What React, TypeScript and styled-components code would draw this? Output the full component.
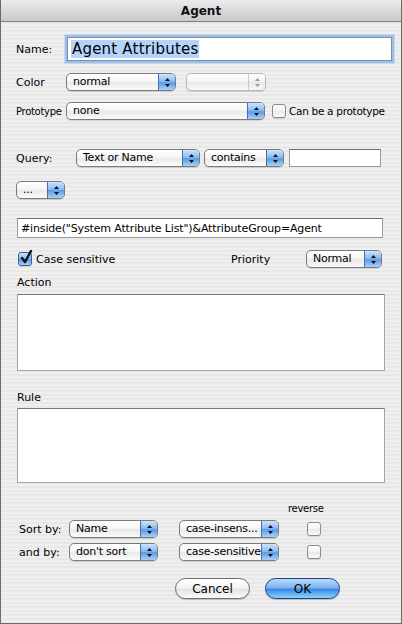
import * as React from 'react'
import styled, { createGlobalStyle, css } from 'styled-components'

const GlobalStyle = createGlobalStyle`
  html, body {
    margin: 0;
    padding: 0;
    background: #fff;
  }
  body {
    font-family: "DejaVu Sans", "Liberation Sans", sans-serif;
    color: #000;
  }
`

const Window = styled.div`
  width: 402px;
  height: 624px;
  box-sizing: border-box;
  border: 1px solid #6a6a6a;
  border-top: none;
  display: flex;
  flex-direction: column;
  background: repeating-linear-gradient(#efefef 0 2px, #e8e8e8 2px 4px);
  font-size: 11px;
`

const TitleBar = styled.div`
  height: 22px;
  box-sizing: border-box;
  border-bottom: 1px solid #7d7d7d;
  background: linear-gradient(#ececec, #d6d6d6 60%, #cbcbcb);
  display: flex;
  align-items: center;
  justify-content: center;
  font-size: 12px;
  font-weight: bold;
  color: #111;
  border-radius: 5px 5px 0 0;
`

const Body = styled.div`
  display: flex;
  flex-direction: column;
  padding-left: 15px;
`

const Row = styled.div<{ $top: number; $h?: number; $left?: number }>`
  display: flex;
  align-items: center;
  margin-top: ${(p) => p.$top}px;
  height: ${(p) => p.$h ?? 18}px;
  padding-left: ${(p) => p.$left ?? 0}px;
`

const Label = styled.span<{ $w?: number; $size?: number; $tight?: boolean }>`
  flex: none;
  width: ${(p) => (p.$w ? `${p.$w}px` : 'auto')};
  white-space: nowrap;
  font-size: ${(p) => p.$size ?? 11}px;
  letter-spacing: ${(p) => (p.$tight ? '-0.3px' : '0')};
`

const Gap = styled.span<{ $w: number }>`
  flex: none;
  width: ${(p) => p.$w}px;
`

const Field = styled.div<{ $w: number; $h: number; $focus?: boolean }>`
  flex: none;
  box-sizing: border-box;
  width: ${(p) => p.$w}px;
  height: ${(p) => p.$h}px;
  background: #fff;
  border: 1px solid #9a9a9a;
  border-top-color: #6f6f6f;
  display: flex;
  align-items: center;
  padding-left: 3px;
  font-size: 11px;
  letter-spacing: -0.15px;
  white-space: nowrap;
  ${(p) =>
    p.$focus &&
    css`
      border-color: #7c8fa8;
      box-shadow: 0 0 0 2px #9cc0ea, 0 0 0 3px #c3d9f2;
    `}
`

const Selected = styled.span`
  background: #b6d4fb;
  font-size: 15px;
  padding: 0 1px;
  line-height: 18px;
  letter-spacing: 0.2px;
`

const TextArea = styled.div<{ $h: number }>`
  box-sizing: border-box;
  width: 368px;
  height: ${(p) => p.$h}px;
  background: #fff;
  border: 1px solid #a4a4a4;
  border-top-color: #777;
  margin-left: 1px;
`

const PopBox = styled.div<{ $w: number; $disabled?: boolean }>`
  flex: none;
  box-sizing: border-box;
  width: ${(p) => p.$w}px;
  height: 18px;
  border: 1px solid ${(p) => (p.$disabled ? '#b8b8b8' : '#7b7b7b')};
  border-radius: 5px;
  display: flex;
  overflow: hidden;
  background: linear-gradient(#ffffff, #f6f6f6 45%, #e9e9e9 55%, #fbfbfb);
  box-shadow: 0 1px 0 rgba(0, 0, 0, 0.12);
`

const PopText = styled.span`
  flex: 1;
  padding-left: 6px;
  font-size: 11px;
  letter-spacing: -0.25px;
  line-height: 16px;
  white-space: nowrap;
  overflow: hidden;
`

const PopArrows = styled.span<{ $disabled?: boolean }>`
  flex: none;
  width: 16px;
  border-left: 1px solid ${(p) => (p.$disabled ? '#c9c9c9' : '#4a6fa6')};
  display: flex;
  align-items: center;
  justify-content: center;
  background: ${(p) =>
    p.$disabled
      ? 'linear-gradient(#fdfdfd, #f1f1f1 50%, #e7e7e7 50%, #f7f7f7)'
      : 'linear-gradient(#cfe4fb, #89bcf1 45%, #5a9be8 55%, #a8d2f8)'};
`

const PopUp = ({ w, text, disabled }: { w: number; text?: string; disabled?: boolean }) => (
  <PopBox $w={w} $disabled={disabled}>
    <PopText>{text}</PopText>
    <PopArrows $disabled={disabled}>
      <svg width="7" height="11" viewBox="0 0 7 11">
        <path d="M3.5 1 L6 4 L1 4 Z M3.5 10 L6 7 L1 7 Z" fill={disabled ? '#9a9a9a' : '#101010'} />
      </svg>
    </PopArrows>
  </PopBox>
)

const CheckBox = styled.span<{ $checked?: boolean }>`
  flex: none;
  position: relative;
  box-sizing: border-box;
  width: 14px;
  height: 14px;
  border: 1px solid ${(p) => (p.$checked ? '#3d5f94' : '#8a8a8a')};
  border-radius: 3px;
  background: ${(p) =>
    p.$checked
      ? 'linear-gradient(#cfe4fb, #89bcf1 45%, #5a9be8 55%, #a8d2f8)'
      : 'linear-gradient(#ffffff, #f3f3f3 50%, #e8e8e8 50%, #fafafa)'};
  box-shadow: 0 1px 0 rgba(0, 0, 0, 0.1);
`

const CheckMark = styled.svg`
  position: absolute;
  left: 1px;
  top: -4px;
`

const Check = ({ checked }: { checked?: boolean }) => (
  <CheckBox $checked={checked}>
    {checked && (
      <CheckMark width="13" height="16" viewBox="0 0 13 16">
        <path d="M2 9 L5 13 L11 2" stroke="#111" strokeWidth="2.4" fill="none" strokeLinecap="round" strokeLinejoin="round" />
      </CheckMark>
    )}
  </CheckBox>
)

const Button = styled.div<{ $default?: boolean }>`
  flex: none;
  box-sizing: border-box;
  width: 75px;
  height: 21px;
  border-radius: 11px;
  display: flex;
  align-items: center;
  justify-content: center;
  font-size: 12px;
  border: 1px solid ${(p) => (p.$default ? '#1f3f86' : '#6e6e6e')};
  background: ${(p) =>
    p.$default
      ? 'linear-gradient(#bcdcfb, #7cb6f1 45%, #3d8ae6 55%, #8ed0fb)'
      : 'linear-gradient(#ffffff, #f4f4f4 45%, #e4e4e4 55%, #fafafa)'};
  box-shadow: 0 1px 1px rgba(0, 0, 0, 0.2);
`

export default function App() {
  return (
    <>
      <GlobalStyle />
      <Window>
        <TitleBar>Agent</TitleBar>
        <Body>
          <Row $top={15} $h={24}>
            <Label $w={51}>Name:</Label>
            <Field $w={325} $h={24} $focus>
              <Selected>Agent Attributes</Selected>
            </Field>
          </Row>

          <Row $top={12}>
            <Label $w={50}>Color</Label>
            <PopUp w={110} text="normal" />
            <Gap $w={10} />
            <PopUp w={80} disabled />
          </Row>

          <Row $top={11}>
            <Label $w={50} $size={10} $tight>Prototype</Label>
            <PopUp w={199} text="none" />
            <Gap $w={7} />
            <Check />
            <Gap $w={3} />
            <Label $size={10.5} $tight>Can be a prototype</Label>
          </Row>

          <Row $top={29}>
            <Label $w={60}>Query:</Label>
            <PopUp w={124} text="Text or Name" />
            <Gap $w={4} />
            <PopUp w={80} text="contains" />
            <Gap $w={5} />
            <Field $w={92} $h={18} />
          </Row>

          <Row $top={14} $left={0}>
            <PopUp w={49} text="..." />
          </Row>

          <Row $top={19} $h={20} $left={1}>
            <Field $w={366} $h={20}>#inside("System Attribute List")&amp;AttributeGroup=Agent</Field>
          </Row>

          <Row $top={12} $left={2}>
            <Check checked />
            <Gap $w={4} />
            <Label $w={195}>Case sensitive</Label>
            <Label $w={75}>Priority</Label>
            <PopUp w={76} text="Normal" />
          </Row>

          <Row $top={8} $h={13} $left={1}>
            <Label>Action</Label>
          </Row>
          <Row $top={5} $h={77}>
            <TextArea $h={77} />
          </Row>

          <Row $top={20} $h={13} $left={1}>
            <Label>Rule</Label>
          </Row>
          <Row $top={4} $h={75}>
            <TextArea $h={75} />
          </Row>

          <Row $top={19} $h={12} $left={272}>
            <Label $size={10} $tight>reverse</Label>
          </Row>

          <Row $top={6} $left={3}>
            <Label $w={50}>Sort by:</Label>
            <PopUp w={89} text="Name" />
            <Gap $w={21} />
            <PopUp w={100} text="case-insens..." />
            <Gap $w={28} />
            <Check />
          </Row>

          <Row $top={5} $left={3}>
            <Label $w={50}>and by:</Label>
            <PopUp w={89} text="don't sort" />
            <Gap $w={21} />
            <PopUp w={100} text="case-sensitive" />
            <Gap $w={28} />
            <Check />
          </Row>

          <Row $top={17} $h={21} $left={159}>
            <Button>Cancel</Button>
            <Gap $w={15} />
            <Button $default>OK</Button>
          </Row>
        </Body>
      </Window>
    </>
  )
}
